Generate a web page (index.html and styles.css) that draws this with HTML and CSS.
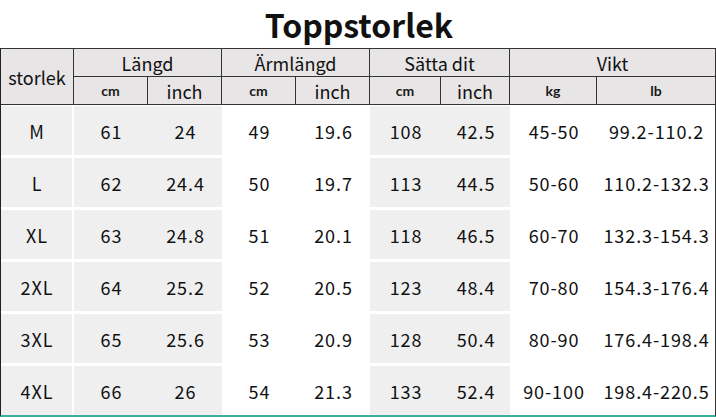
FILE: index.html
```html
<!DOCTYPE html>
<html lang="sv">
<head>
<meta charset="utf-8">
<title>Toppstorlek</title>
<link rel="stylesheet" href="styles.css">
</head>
<body>
<h1 class="title">Toppstorlek</h1>
<table class="size-table">
  <colgroup>
    <col class="c1"><col class="c2"><col class="c3"><col class="c4"><col class="c5"><col class="c6"><col class="c7"><col class="c8"><col class="c9">
  </colgroup>
  <thead>
    <tr class="h1">
      <th rowspan="2" class="hs">storlek</th>
      <th colspan="2">Längd</th>
      <th colspan="2">Ärmlängd</th>
      <th colspan="2">Sätta dit</th>
      <th colspan="2" class="last">Vikt</th>
    </tr>
    <tr class="h2">
      <th class="unit">cm</th><th>inch</th>
      <th class="unit">cm</th><th>inch</th>
      <th class="unit">cm</th><th>inch</th>
      <th class="unit">kg</th><th class="unit last">lb</th>
    </tr>
  </thead>
  <tbody>
    <tr><td class="sz">M</td><td class="g">61</td><td class="g">24</td><td>49</td><td>19.6</td><td class="g">108</td><td class="g">42.5</td><td>45-50</td><td>99.2-110.2</td></tr>
    <tr><td class="sz">L</td><td class="g">62</td><td class="g">24.4</td><td>50</td><td>19.7</td><td class="g">113</td><td class="g">44.5</td><td>50-60</td><td>110.2-132.3</td></tr>
    <tr><td class="sz">XL</td><td class="g">63</td><td class="g">24.8</td><td>51</td><td>20.1</td><td class="g">118</td><td class="g">46.5</td><td>60-70</td><td>132.3-154.3</td></tr>
    <tr><td class="sz">2XL</td><td class="g">64</td><td class="g">25.2</td><td>52</td><td>20.5</td><td class="g">123</td><td class="g">48.4</td><td>70-80</td><td>154.3-176.4</td></tr>
    <tr><td class="sz">3XL</td><td class="g">65</td><td class="g">25.6</td><td>53</td><td>20.9</td><td class="g">128</td><td class="g">50.4</td><td>80-90</td><td>176.4-198.4</td></tr>
    <tr><td class="sz">4XL</td><td class="g">66</td><td class="g">26</td><td>54</td><td>21.3</td><td class="g">133</td><td class="g">52.4</td><td>90-100</td><td>198.4-220.5</td></tr>
  </tbody>
</table>
</body>
</html>
```
FILE: styles.css
```css
html, body {
  margin: 0;
  padding: 0;
  background: #fff;
}
body {
  width: 716px;
  height: 418px;
  overflow: hidden;
  font-family: "Noto Sans CJK SC", "Noto Sans", sans-serif;
  color: #111;
}
.title {
  margin: 0;
  height: 48px;
  display: flex;
  align-items: center;
  justify-content: center;
  font-size: 32px;
  font-weight: 700;
  line-height: 1;
  padding-left: 2px;
  box-sizing: border-box;
}
.size-table {
  border-collapse: separate;
  border-spacing: 0;
  width: 715px;
  table-layout: fixed;
  border-left: 1px solid #222;
  border-right: 1px solid #333;
  border-top: 1px solid #333;
  border-bottom: 2px solid #3bb39b;
}
.c1 { width: 73px; }
.c2 { width: 74px; }
.c3 { width: 74px; }
.c4 { width: 74px; }
.c5 { width: 74px; }
.c6 { width: 71px; }
.c7 { width: 69px; }
.c8 { width: 87px; }
.c9 { width: 118px; }
th {
  background: #e7e5e5;
  font-weight: 400;
  font-size: 18px;
  height: 27px;
  padding: 0;
  border-right: 1px solid #333;
  border-bottom: 1px solid #333;
  line-height: 1;
}
th.last { border-right: 0; }
th.hs { height: 55px; }
th.unit {
  font-family: "Lato", "Noto Sans", sans-serif;
  font-weight: 700;
  font-size: 14px;
  color: #1a1a1a;
}
td {
  font-size: 18px;
  letter-spacing: 0.9px;
  text-indent: 1px;
  text-align: center;
  height: 49px;
  padding: 0;
  border-top: 3px solid #fff;
  line-height: 1;
}
tbody tr:first-child td {
  border-top-width: 1px;
}
td.sz {
  background: #efefef;
  border-right: 2px solid #fff;
}
td.g {
  background: #efefef;
}
```
